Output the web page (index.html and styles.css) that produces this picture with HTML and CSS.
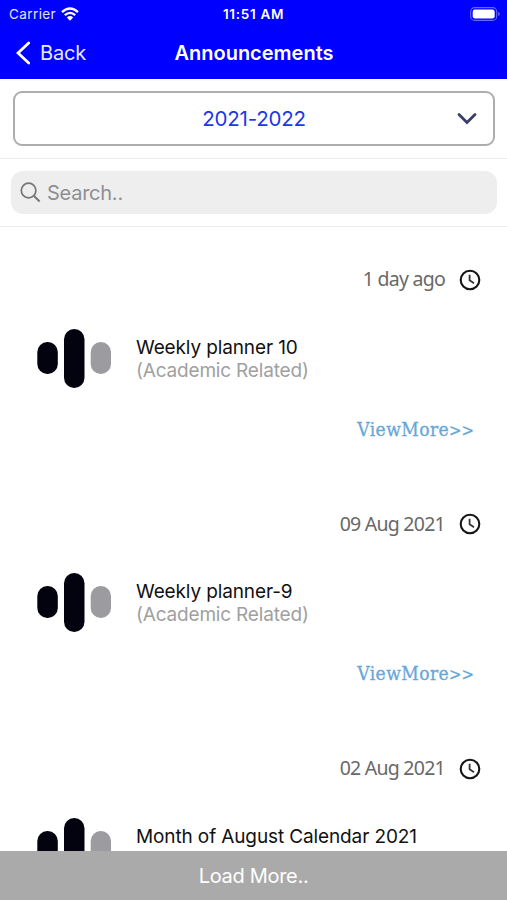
FILE: index.html
```html
<!DOCTYPE html>
<html lang="en">
<head>
<meta charset="utf-8">
<title>Announcements</title>
<link rel="stylesheet" href="styles.css">
</head>
<body>
<svg class="defs" aria-hidden="true">
  <symbol id="clock" viewBox="0 0 22 22"><circle cx="11" cy="11" r="9.3" fill="none" stroke="#151515" stroke-width="2.1"/><path d="M10.6 5.8V11.3L15 14.2" fill="none" stroke="#333" stroke-width="1.8"/></symbol>
  <symbol id="bars" viewBox="0 0 74 60"><rect x="0.3" y="13" width="20.5" height="32" rx="10" fill="#03020f"/><rect x="27" y="0" width="20.5" height="59" rx="10.2" fill="#03020f"/><rect x="53.7" y="13" width="20.3" height="32" rx="10" fill="#9c9b9f"/></symbol>
</svg>
<div class="app">
  <header class="header">
    <div class="status">
      <div class="carrier"><span class="carrier-name">Carrier</span>
        <svg width="18" height="14" viewBox="0 0 18 14" fill="none" stroke="#fff" stroke-width="2.3"><path d="M1 5.1Q9-2.1 17 5.1M3.8 8.2Q9 3.5 14.2 8.2"/><path d="M5.8 10.5Q9 7.7 12.2 10.5L9 13.8Z" fill="#fff" stroke="none"/></svg>
      </div>
      <span class="time">11:51 AM</span>
      <svg class="battery" width="31" height="14" viewBox="0 0 31 14"><rect x=".7" y=".6" width="26" height="12.8" rx="4" fill="none" stroke="#6868ff" stroke-width="1.1"/><rect x="2.7" y="2.5" width="22" height="9" rx="2.2" fill="#fff"/><path d="M28.2 4.8Q31.6 7 28.2 9.2Z" fill="#6868ff"/></svg>
    </div>
    <div class="nav">
      <div class="back"><svg width="14" height="24" viewBox="0 0 14 24"><path d="M12.7 2L2 12L12.7 22" fill="none" stroke="#fff" stroke-width="2.8" stroke-linecap="round"/></svg><span class="back-label">Back</span></div>
      <h1 class="title">Announcements</h1>
      <span></span>
    </div>
  </header>
  <section class="year-panel">
    <div class="year"><span></span><span class="year-label">2021-2022</span><svg width="20" height="13" viewBox="0 0 20 13"><path d="M2 2.5L10 10.5L18 2.5" fill="none" stroke="#3d3c67" stroke-width="2.8" stroke-linecap="round"/></svg></div>
  </section>
  <section class="search-panel">
    <div class="search"><svg width="21" height="21" viewBox="0 0 21 21" fill="none" stroke="#77777b" stroke-width="1.7"><circle cx="8.6" cy="8.5" r="7.3"/><path d="M13.8 13.8L19.6 19.5" stroke-width="2"/></svg><span class="search-label">Search..</span></div>
  </section>
  <main class="list">
    <article class="item">
      <div class="date"><span class="ago">1 day ago</span><svg class="clock"><use href="#clock"/></svg></div>
      <div class="body"><svg class="logo"><use href="#bars"/></svg><div class="text"><div class="name">Weekly planner 10</div><div class="kind">(Academic Related)</div></div></div>
      <div class="more"><span>ViewMore<span class="arrows">&gt;&gt;</span></span></div>
    </article>
    <article class="item">
      <div class="date"><span>09 Aug 2021</span><svg class="clock"><use href="#clock"/></svg></div>
      <div class="body"><svg class="logo"><use href="#bars"/></svg><div class="text"><div class="name">Weekly planner-9</div><div class="kind">(Academic Related)</div></div></div>
      <div class="more"><span>ViewMore<span class="arrows">&gt;&gt;</span></span></div>
    </article>
    <article class="item">
      <div class="date"><span>02 Aug 2021</span><svg class="clock"><use href="#clock"/></svg></div>
      <div class="body"><svg class="logo"><use href="#bars"/></svg><div class="text"><div class="name long">Month of August Calendar 2021</div></div></div>
    </article>
  </main>
  <footer class="load"><span class="load-label">Load More..</span></footer>
</div>
</body>
</html>
```

FILE: styles.css
```css
* { box-sizing: border-box; }
body { margin: 0; background: #fff; font-family: Inter, "Liberation Sans", sans-serif; }
span, .name, .kind, .title { white-space: nowrap; }
svg { display: block; flex: none; }
.defs { width: 0; height: 0; position: absolute; }
.app { height: 900px; display: flex; flex-direction: column; overflow: hidden; }
.header { flex: none; height: 79px; background: #00f; color: #fff; }
.status { height: 27px; display: grid; grid-template-columns: 1fr auto 1fr; align-items: center; padding: 0 6px 0 9px; font-size: 13px; }
.carrier { display: flex; align-items: center; gap: 5px; color: #e4e4ff; }
.carrier-name { font-size: 13.5px; letter-spacing: .4px; }
.time { font-weight: 600; font-size: 13.5px; letter-spacing: .7px; margin-right: 3px; }
.battery { justify-self: end; }
.nav { height: 52px; display: grid; grid-template-columns: 1fr auto 1fr; align-items: center; padding: 0 15px 0 16px; }
.back { display: flex; align-items: center; gap: 10px; }
.back-label { font-size: 20px; letter-spacing: -.2px; color: #e8e8ff; }
.title { margin: 0; font-size: 20px; font-weight: 600; }
.year-panel { flex: none; height: 80px; padding: 12px 12px 0 13px; border-bottom: 1px solid #ededed; }
.year { height: 55px; border: 2px solid #adadad; border-radius: 9px; display: grid; grid-template-columns: 1fr auto 1fr; align-items: center; }
.year svg { justify-self: end; margin-right: 16px; }
.year-label { color: #1c37e5; font-size: 20.5px; letter-spacing: -.2px; }
.search-panel { flex: none; height: 68px; padding: 12px 10px 0 11px; border-bottom: 1px solid #ededed; }
.search { height: 43px; border-radius: 12px; background: #eee; display: flex; align-items: center; gap: 7px; padding-left: 9px; }
.search-label { color: #8e8e91; font-size: 20px; letter-spacing: -.25px; margin: 1px 0 0 -1px; }
.list { flex: 1; min-height: 0; overflow: hidden; }
.item { height: 244.5px; padding-top: 37.5px; }
.date { height: 30px; display: flex; justify-content: flex-end; align-items: center; gap: 14px; padding-right: 26px; font: 19.5px "Noto Sans", sans-serif; letter-spacing: -.75px; color: #686868; }
.date span { margin-top: -2px; }
.clock { width: 22px; height: 22px; }
.body { height: 60px; margin-top: 34px; display: flex; align-items: center; gap: 25px; padding-left: 37px; }
.logo { width: 74px; height: 60px; }
.text { height: 46px; }
.name { font-size: 19px; line-height: 23px; letter-spacing: -.12px; color: #111; }
.kind { font-size: 19px; line-height: 23px; letter-spacing: -.18px; color: #a0a0a0; }
.more { height: 30px; margin-top: 25px; display: flex; justify-content: flex-end; align-items: center; padding-right: 33px; font: 19px "DejaVu Serif Condensed", "DejaVu Serif", serif; color: #67a7d8; -webkit-text-stroke: .3px #67a7d8; letter-spacing: .45px; }
.arrows { font-size: 16.5px; letter-spacing: 0; }
.load { flex: none; height: 49px; background: #aaa; display: flex; align-items: center; justify-content: center; color: #fff; font-size: 20px; }
.load-label { letter-spacing: -.3px; padding-top: 1px; }
```
